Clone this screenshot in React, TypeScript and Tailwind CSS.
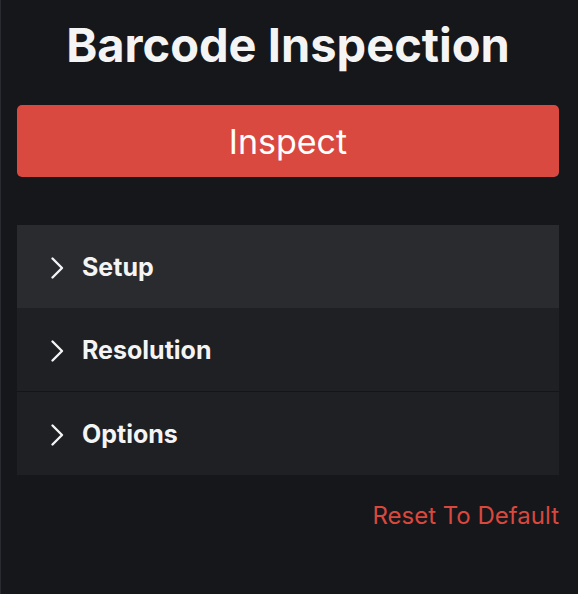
const sections = ['Setup', 'Resolution', 'Options']

function Chevron() {
  return (
    <svg width="15" height="24" viewBox="0 0 15 24" fill="none" className="shrink-0 text-[#f4f4f5]">
      <polyline
        points="2.5,2.5 12,12 2.5,21.5"
        stroke="currentColor"
        strokeWidth="2.4"
        strokeLinecap="round"
        strokeLinejoin="round"
      />
    </svg>
  )
}

export default function App() {
  return (
    <div
      className="flex h-[594px] w-[578px] flex-col border-l border-[#2a2b30] bg-[#16171b] pl-4 pr-[19px] text-white"
      style={{ fontFamily: 'Inter, "Noto Sans", sans-serif' }}
    >
      <h1 className="mt-[15px] text-center text-[47px] font-bold leading-[60px] text-[#f4f4f5]">
        Barcode Inspection
      </h1>
      <button
        type="button"
        className="mt-[30px] flex h-[72px] w-full items-center justify-center rounded-[5px] bg-[#d9493f] text-[34px] text-white"
      >
        Inspect
      </button>
      <div className="mt-[48px] flex flex-col">
        {sections.map((name, i) => (
          <div
            key={name}
            className={`flex items-center gap-[17px] pl-[33px] pt-[2px] ${
              i === 0 ? 'bg-[#2a2b2f]' : 'bg-[#1f2024]'
            } ${i === 2 ? 'h-[84px] border-t border-[#141518]' : 'h-[83px]'}`}
          >
            <Chevron />
            <span className="text-[25px] font-bold text-[#f4f4f5]">{name}</span>
          </div>
        ))}
      </div>
      <div className="mt-[23px] flex justify-end">
        <button type="button" className="text-[24px] text-[#d9483d]">
          Reset To Default
        </button>
      </div>
    </div>
  )
}
